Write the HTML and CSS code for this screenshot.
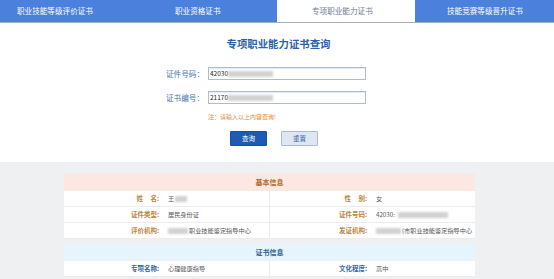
FILE: index.html
```html
<!DOCTYPE html>
<html lang="zh-CN">
<head>
<meta charset="utf-8">
<title>专项职业能力证书查询</title>
<link rel="stylesheet" href="styles.css">
</head>
<body>
<nav class="tabs">
  <div class="tab t1">职业技能等级评价证书</div>
  <div class="tab t2">职业资格证书</div>
  <div class="tab t3 active">专项职业能力证书</div>
  <div class="tab t4">技能竞赛等级晋升证书</div>
</nav>
<section class="search">
  <h1 class="title">专项职业能力证书查询</h1>
  <div class="form">
    <label class="label">证件号码：</label>
    <div class="input"><span>42030</span><span class="blur w45"></span></div>
    <label class="label">证书编号：</label>
    <div class="input"><span>21170</span><span class="blur w45"></span></div>
    <div class="note">注：请输入以上内容查询!</div>
  </div>
  <div class="buttons">
    <button class="btn primary">查询</button>
    <button class="btn ghost">重置</button>
  </div>
</section>
<section class="result">
  <div class="card">
    <div class="head basic">基本信息</div>
    <div class="row">
      <div class="k brown">姓&nbsp;&nbsp;&nbsp;&nbsp;&nbsp;名:</div><div class="v">王<span class="blur w12"></span></div>
      <div class="k brown">性&nbsp;&nbsp;&nbsp;&nbsp;&nbsp;别:</div><div class="v">女</div>
    </div>
    <div class="row">
      <div class="k brown">证件类型:</div><div class="v">居民身份证</div>
      <div class="k brown">证件号码:</div><div class="v">42030:<span class="blur w60"></span></div>
    </div>
    <div class="row">
      <div class="k brown">评价机构:</div><div class="v"><span class="blur w20"></span>职业技能鉴定指导中心</div>
      <div class="k brown">发证机构:</div><div class="v"><span class="blur w25"></span>(市职业技能鉴定指导中心</div>
    </div>
  </div>
  <div class="card">
    <div class="head cert">证书信息</div>
    <div class="row">
      <div class="k blue">专项名称:</div><div class="v">心理健康指导</div>
      <div class="k blue">文化程度:</div><div class="v">高中</div>
    </div>
  </div>
</section>
</body>
</html>
```
FILE: styles.css
```css
* { box-sizing: border-box; }
html, body { margin: 0; padding: 0; background: #fff; }
body {
  font-family: "Noto Sans CJK SC", "Noto Sans", sans-serif;
  width: 554px;
  height: 279px;
  overflow: hidden;
}
.tabs {
  display: grid;
  grid-template-columns: 138px 139px 138px 139px;
  height: 23px;
  background: #4b80dc;
  border-bottom: 1px solid #a8aeb8;
}
.tab {
  color: #fff;
  font-size: 7.6px;
  line-height: 22px;
  white-space: nowrap;
}
.t1 { padding-left: 17px; }
.t2 { padding-left: 37px; }
.t3 { padding-left: 35px; }
.t4 { padding-left: 32px; }
.tab.active { background: #fff; color: #6b7c94; }

.search {
  height: 139px;
  padding-top: 14px;
}
.title {
  margin: 0;
  text-align: center;
  font-size: 10.4px;
  line-height: 14px;
  font-weight: bold;
  color: #2c62aa;
  padding-left: 3px;
}
.form {
  display: grid;
  grid-template-columns: 40px 158px;
  column-gap: 4px;
  row-gap: 11px;
  margin: 16px 0 0 164px;
  align-items: center;
}
.label {
  font-size: 7.6px;
  color: #4674b0;
  text-align: right;
  white-space: nowrap;
  line-height: 13px;
}
.input {
  height: 13px;
  border: 1px solid #a9bdd4;
  box-shadow: inset 0 1px 1px #e4eaf2;
  font-size: 6.5px;
  color: #222;
  line-height: 11px;
  padding-left: 1px;
  display: flex;
  align-items: center;
}
.blur {
  display: inline-block;
  height: 6px;
  background: #d2d2d2;
  filter: blur(1.2px);
}
.w45 { width: 45px; }
.w12 { width: 12px; margin-left: 1px; }
.w60 { width: 50px; margin-left: 3px; }
.w20 { width: 20px; margin-right: 1px; }
.w25 { width: 25px; margin-right: 1px; }
.note {
  grid-column: 2;
  font-size: 6px;
  color: #e08a3c;
  line-height: 8px;
  margin-top: -2px;
}
.buttons {
  display: flex;
  gap: 14px;
  margin: 10px 0 0 230px;
}
.btn {
  width: 37px;
  height: 15px;
  padding: 0;
  font-family: inherit;
  font-size: 6.5px;
  border-radius: 1px;
  line-height: 13px;
}
.primary { background: #1c5cb4; color: #fff; border: 1px solid #16509e; }
.ghost { background: #dde6f1; color: #3a66a2; border: 1px solid #a8bcd4; }

.result {
  background: #eff0f2;
  height: 117px;
  padding: 12px 0 0 64px;
}
.card {
  width: 411px;
  background: #fff;
  margin-bottom: 5px;
}
.head {
  height: 17px;
  line-height: 17px;
  text-align: center;
  font-size: 7px;
  font-weight: bold;
}
.basic { background: #fce8e3; color: #b06a2a; }
.cert { background: #e6f5fc; color: #2b5d96; }
.row {
  display: grid;
  grid-template-columns: 99px 107px 101px 104px;
  height: 16px;
  border-bottom: 1px solid #ececec;
  line-height: 15px;
}
.row .k { font-size: 6.5px; text-align: right; padding-right: 4px; font-weight: bold; white-space: nowrap; }
.row .v { font-size: 6.2px; padding-left: 5px; color: #555; white-space: nowrap; display: flex; align-items: center; border-right: 1px solid #ececec; }
.row .v:last-child { border-right: 0; }
.brown { color: #bb8646; }
.blue { color: #3a66a0; }
```
